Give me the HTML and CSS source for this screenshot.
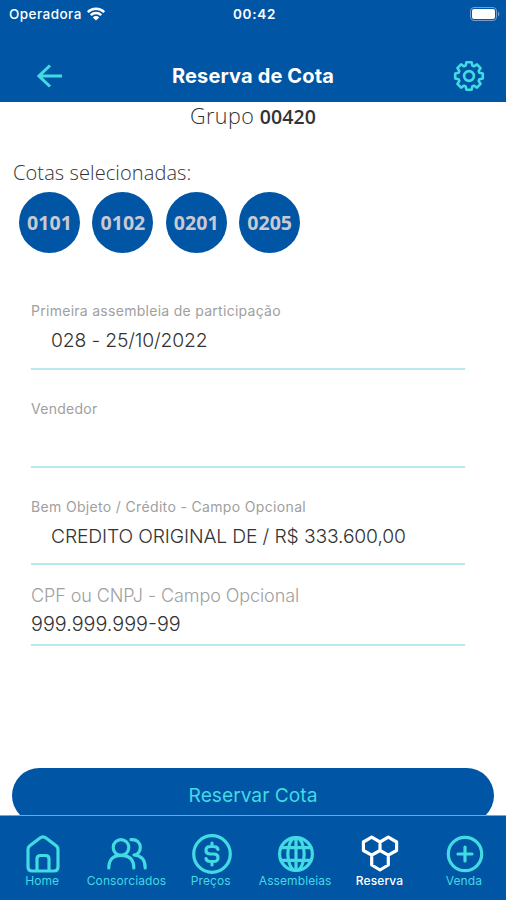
FILE: index.html
```html
<!DOCTYPE html>
<html lang="pt-BR">
<head>
<meta charset="utf-8">
<title>Reserva de Cota</title>
<link rel="stylesheet" href="styles.css">
</head>
<body>
<div class="app">
  <header class="header">
    <div class="status">
      <div class="carrier"><span>Operadora</span>
        <svg class="wifi" viewBox="0 0 20 14" width="20" height="14"><path d="M1.800 5.200a11.600 11.600 0 0 1 16.400 0M4.800 8.200a7.400 7.400 0 0 1 10.400 0" fill="none" stroke="currentColor" stroke-width="2.500"/><path d="M10 13.600 6.800 10.400a4.600 4.600 0 0 1 6.400 0z" fill="currentColor"/></svg>
      </div>
      <span class="clock">00:42</span>
      <svg class="battery" viewBox="0 0 30 14" width="30" height="14"><rect x=".5" y=".5" width="26" height="13" rx="3.500" fill="none" stroke="#799dcd"/><rect x="2" y="2" width="23" height="10" rx="2" fill="#fff"/><path d="M28 4.500q3 2.500 0 5z" fill="#799dcd"/></svg>
    </div>
    <div class="titlebar">
      <svg class="back" viewBox="0 0 26 24" width="26" height="24"><path d="M25 12H2M13 1.500 2 12l11 10.500" fill="none" stroke="currentColor" stroke-width="3"/></svg>
      <h1 class="title">Reserva de Cota</h1>
      <svg class="gear" viewBox="-16 -16 32 32" width="32" height="32" fill="none" stroke="currentColor" stroke-width="2.600" stroke-linejoin="round"><path d="M-3.300-10.400-2.600-13.800H2.600L3.300-10.400 5.020-9.690 7.920-11.600 11.600-7.920 9.690-5.020 10.400-3.300 13.800-2.600V2.600L10.400 3.300 9.690 5.020 11.600 7.920 7.920 11.600 5.020 9.690 3.300 10.400 2.600 13.800H-2.600L-3.300 10.400-5.020 9.690-7.920 11.600-11.600 7.920-9.690 5.020-10.400 3.300-13.800 2.600V-2.600L-10.400-3.300-9.690-5.020-11.600-7.920-7.920-11.600-5.020-9.690Z"/><circle r="4.900"/></svg>
    </div>
  </header>
  <main class="content">
    <p class="group"><span class="group-label">Grupo</span> <b class="group-number">00420</b></p>
    <p class="selected">Cotas selecionadas:</p>
    <div class="quotas"><span class="quota">0101</span><span class="quota">0102</span><span class="quota">0201</span><span class="quota">0205</span></div>
    <form class="form">
      <div class="field"><label class="label">Primeira assembleia de participação</label><div class="value">028 - 25/10/2022</div></div>
      <div class="field"><label class="label">Vendedor</label><div class="value"></div></div>
      <div class="field asset"><label class="label">Bem Objeto / Crédito - Campo Opcional</label><div class="value">CREDITO ORIGINAL DE / R$ 333.600,00</div></div>
      <div class="field doc"><label class="label">CPF ou CNPJ - Campo Opcional</label><div class="value">999.999.999-99</div></div>
    </form>
    <button class="submit"><span>Reservar Cota</span></button>
  </main>
  <nav class="tabs">
    <a class="tab"><svg viewBox="-20 -20 40 40" width="40" height="40"><path d="M-15-4.500Q-15-6.500-13.500-8L-3-16Q0-18.300 3-16L13.500-8Q15-6.500 15-4.500V13Q15 17 11 17H-11Q-15 17-15 13ZM-6 16.500V5Q-6 1.500-2.500 1.500H2.500Q6 1.500 6 5V16.500"/></svg><span>Home</span></a>
    <a class="tab"><svg viewBox="-20 -20 40 40" width="40" height="40"><circle cx="-6" cy="-6.500" r="7.800"/><path d="M-18.200 14C-18.200 5-13.500 1.300-6 1.300S6.800 5 6.800 14M4-14.300C10-15 13.300-11 13.300-6.500S10 1.300 7 1C14 1.500 18.200 6 18.200 14"/></svg><span>Consorciados</span></a>
    <a class="tab"><svg viewBox="-20 -20 40 40" width="40" height="40"><circle r="18.300"/><path d="M6-4.500Q5.500-7.500 1.500-7.500H-1.500Q-6-7.500-6-3.800T-1.500 0H1.500Q6 0 6 3.800T1.500 7.500H-1.500Q-5.500 7.500-6 4.500M0-7.500V-11M0 7.500V11"/></svg><span>Preços</span></a>
    <a class="tab"><svg viewBox="-20 -20 40 40" width="40" height="40"><circle r="16.400"/><ellipse rx="8.200" ry="16.400"/><path d="M0-16V16M-15-6.300H15M-15 6.300H15"/></svg><span>Assembleias</span></a>
    <a class="tab active"><svg viewBox="-20 -20 40 40" width="40" height="40"><path d="M-8.300-16.800 0-12V-3.500L-8.300 1.200-16.600-3.500V-12ZM8.300-16.800 16.600-12V-3.500L8.300 1.200 0-3.500V-12ZM0-3.500 8.300 1.200V11L0 16-8.300 11V1.200Z"/></svg><span>Reserva</span></a>
    <a class="tab"><svg viewBox="-20 -20 40 40" width="40" height="40"><circle r="16.700"/><path d="M-7 0H7M0-7V7"/></svg><span>Venda</span></a>
  </nav>
</div>
</body>
</html>
```
FILE: styles.css
```css
* { box-sizing: border-box; }
body { margin: 0; background: #fff; font-family: Inter, "Liberation Sans", sans-serif; }
p, h1 { margin: 0; }
.app { width: 506px; height: 900px; display: flex; flex-direction: column; overflow: hidden; }
.header { height: 102px; flex: none; background: #0055a4; color: #fff; }
.status { height: 27px; display: grid; grid-template-columns: 1fr auto 1fr; align-items: center; padding: 0 6px 0 9px; font-size: 13px; }
.carrier { display: flex; align-items: center; gap: 4px; font-size: 13.500px; letter-spacing: .45px; font-weight: 500; }
.clock { font-size: 13.500px; font-weight: 600; letter-spacing: .7px; }
.battery { justify-self: end; }
.titlebar { height: 75px; display: grid; grid-template-columns: 1fr auto 1fr; align-items: center; padding: 23px 21px 0; }
.title { font-size: 20px; font-weight: 700; line-height: 24px; letter-spacing: .15px; }
.back, .gear { color: #42dae3; }
.back { margin-left: 16px; }
.gear { justify-self: end; }
.content { flex: 1; min-height: 0; overflow: hidden; }
.group { height: 30px; line-height: 28px; text-align: center; font-family: "Open Sans", sans-serif; font-size: 21px; font-weight: 300; color: #333; }
.group-label { font-size: 21.500px; letter-spacing: .5px; }
.group-number { font-size: 19.500px; font-weight: 600; letter-spacing: .1px; }
.selected { margin: 27px 0 0 13px; height: 28px; line-height: 28px; font-family: "Open Sans", sans-serif; font-size: 20px; font-weight: 300; letter-spacing: .1px; color: #333; }
.quotas { display: flex; gap: 12.400px; padding: 5px 0 0 19px; }
.quota { width: 61px; height: 61px; border-radius: 50%; background: #0055a4; color: #c9c9d1; display: grid; place-items: center; font: 700 19.600px "Open Sans", sans-serif; }
.form { margin: 19px 41px 0 31px; }
.field { height: 98px; padding-top: 29px; border-bottom: 2px solid #b9e9ef; display: flex; flex-direction: column; }
.label { height: 20px; line-height: 20px; font-size: 14px; letter-spacing: .28px; color: #a0a0a0; white-space: nowrap; }
.value { height: 38px; padding-left: 20px; line-height: 38px; font-size: 19.300px; letter-spacing: -.14px; font-weight: 300; color: #333; white-space: nowrap; }
.asset { height: 97px; }
.asset .label { letter-spacing: .34px; }
.doc { height: 81px; padding-top: 19px; }
.doc .label { height: 24px; line-height: 24px; font-size: 18px; font-weight: 300; letter-spacing: -.09px; }
.doc .value { padding: 0; height: 32px; line-height: 32px; font-size: 19.800px; letter-spacing: 0; }
.submit { display: block; width: 482px; height: 55px; margin: 122px 12px 0; padding: 0 0 2px; border: 0; border-radius: 28px; background: #0055a4; color: #42dae3; font: 400 19.200px Inter, sans-serif; }
.tabs { height: 85px; flex: none; border-top: 1px solid #7ba5d0; background: #0055a4; display: grid; grid-template-columns: repeat(6, 1fr); padding-top: 17.500px; }
.tab { display: flex; flex-direction: column; align-items: center; color: #42dae3; font-size: 12px; letter-spacing: .1px; line-height: 14px; }
.tab svg { flex: none; width: 40px; height: 40px; margin-left: 2px; fill: none; stroke: currentColor; stroke-width: 3.200; stroke-linecap: round; stroke-linejoin: round; }
.active { color: #fff; font-weight: 500; }
```
